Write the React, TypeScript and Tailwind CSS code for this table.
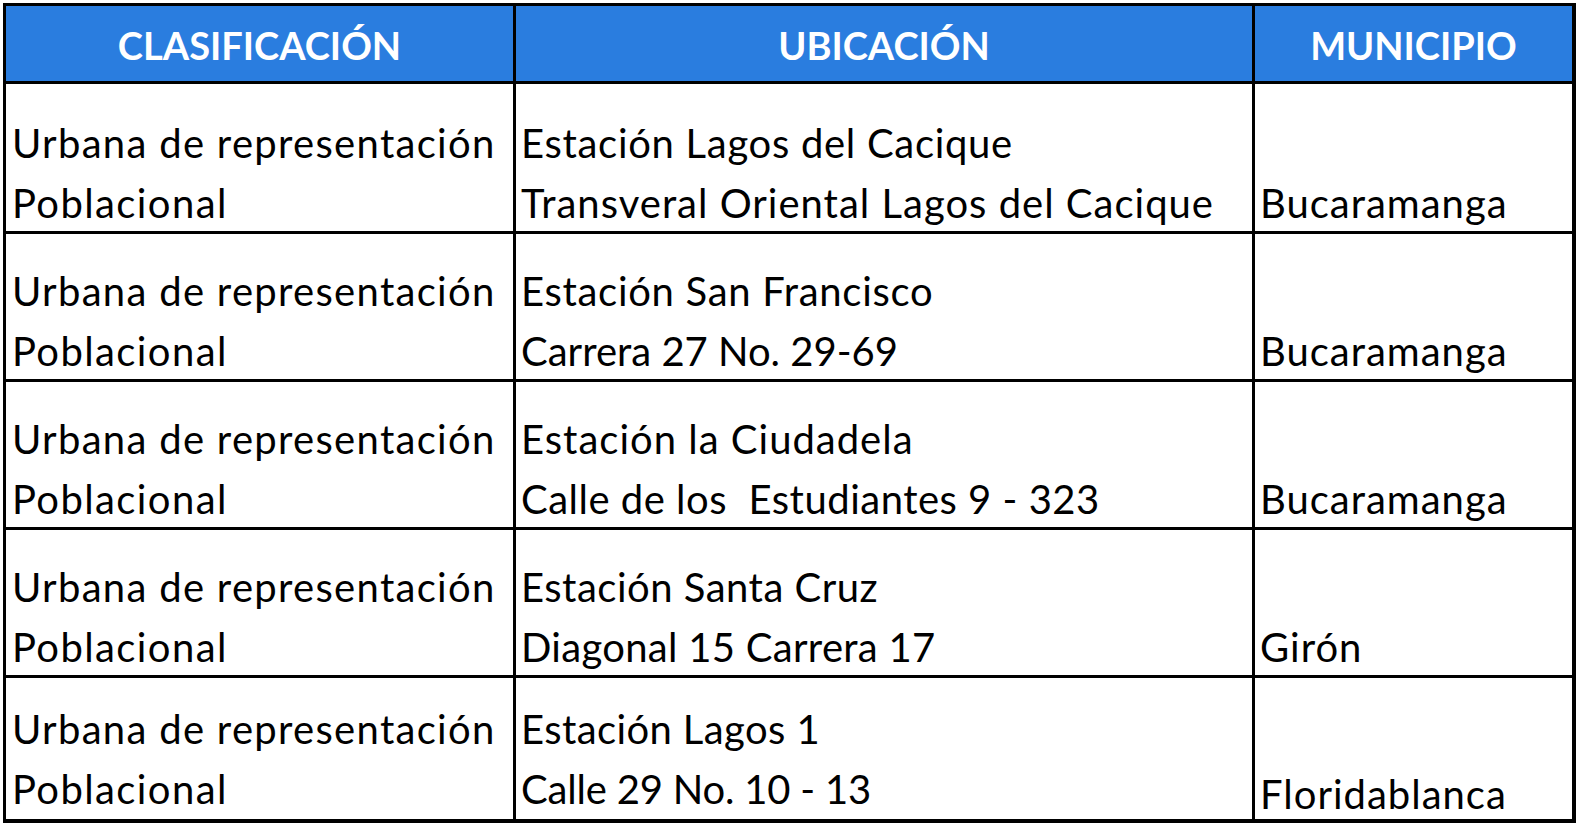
type Line = { t: string; k: string };

const clase: Line[] = [
  { t: "Urbana de representación", k: "tracking-[1.3px]" },
  { t: "Poblacional", k: "tracking-[1.4px]" },
];

const rows: { lugar: Line[]; municipio: Line; h: string; last?: boolean }[] = [
  {
    lugar: [
      { t: "Estación Lagos del Cacique", k: "tracking-[0.7px]" },
      { t: "Transveral Oriental Lagos del Cacique", k: "tracking-[1px]" },
    ],
    municipio: { t: "Bucaramanga", k: "tracking-[1px]" },
    h: "h-[147px]",
  },
  {
    lugar: [
      { t: "Estación San Francisco", k: "tracking-[0.7px]" },
      { t: "Carrera 27 No. 29-69", k: "tracking-normal" },
    ],
    municipio: { t: "Bucaramanga", k: "tracking-[1px]" },
    h: "h-[145px]",
  },
  {
    lugar: [
      { t: "Estación la Ciudadela", k: "tracking-[1px]" },
      { t: "Calle de los  Estudiantes 9 - 323", k: "tracking-[0.5px]" },
    ],
    municipio: { t: "Bucaramanga", k: "tracking-[1px]" },
    h: "h-[145px]",
  },
  {
    lugar: [
      { t: "Estación Santa Cruz", k: "tracking-[0.5px]" },
      { t: "Diagonal 15 Carrera 17", k: "tracking-[0.3px]" },
    ],
    municipio: { t: "Girón", k: "tracking-[1px]" },
    h: "h-[145px]",
  },
  {
    lugar: [
      { t: "Estación Lagos 1", k: "tracking-[0.4px]" },
      { t: "Calle 29 No. 10 - 13", k: "tracking-[-0.2px]" },
    ],
    municipio: { t: "Floridablanca", k: "tracking-[1px]" },
    h: "h-[141px]",
    last: true,
  },
];

const font = "font-['Lato','Open_Sans',sans-serif]";

function HeaderCell({ label }: { label: string }) {
  return (
    <div className="bg-[#2a7ddf] h-[75px] flex items-center justify-center pt-[3px]">
      <span className="text-white font-bold text-[38px] leading-none">{label}</span>
    </div>
  );
}

// bottom-aligned cell, like the spreadsheet it came from
function Cell({ lines, className, shift }: { lines: Line[]; className: string; shift: string }) {
  return (
    <div className={`bg-white flex flex-col justify-end ${className}`}>
      {lines.map((l, i) => (
        <div
          key={i}
          className={`whitespace-pre text-[40px] leading-[60px] text-black ${l.k} ${shift}`}
        >
          {l.t}
        </div>
      ))}
    </div>
  );
}

export default function App() {
  return (
    <div className={`w-[1582px] h-[828px] bg-white ${font}`}>
      <div className="ml-[3px] mt-[3px] inline-grid grid-cols-[507px_736px_317px] gap-[3px] bg-black pt-[3px] pl-[3px] pr-[4px] pb-[4px]">
        <HeaderCell label="CLASIFICACIÓN" />
        <HeaderCell label="UBICACIÓN" />
        <HeaderCell label="MUNICIPIO" />
        {rows.map((r, i) => (
          <div key={i} className="contents">
            <Cell
              lines={clase}
              className={`${r.h} pl-[6px] ${r.last ? "pb-[2px]" : ""}`}
              shift="translate-y-[2px]"
            />
            <Cell
              lines={r.lugar}
              className={`${r.h} pl-[5px] ${r.last ? "pb-[2px]" : ""}`}
              shift="translate-y-[2px]"
            />
            <Cell
              lines={[r.municipio]}
              className={`${r.h} pl-[5px]`}
              shift={r.last ? "translate-y-[5px]" : "translate-y-[2px]"}
            />
          </div>
        ))}
      </div>
    </div>
  );
}
